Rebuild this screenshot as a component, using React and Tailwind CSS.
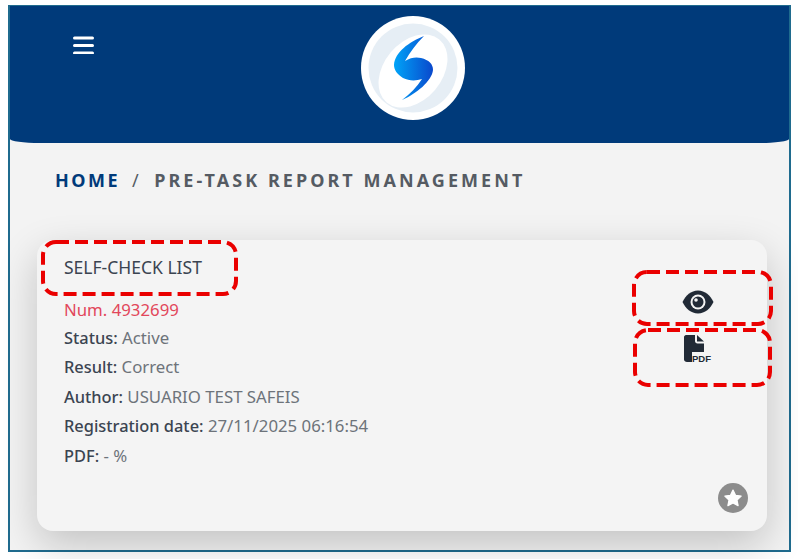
import React from 'react';

// red dashed callouts drawn over the card
function Callout({ width, height, className }) {
  return (
    <svg width={width} height={height} className={`absolute ${className}`} fill="none">
      <rect
        x="2"
        y="2"
        width={width - 4}
        height={height - 4}
        rx="13"
        stroke="#ea0000"
        strokeWidth="4"
        strokeDasharray="13 6"
      />
    </svg>
  );
}

function Logo() {
  return (
    <div className="w-[104px] h-[104px] rounded-full bg-white">
      <svg width="104" height="104" viewBox="0 0 104 104">
        <defs>
          <linearGradient id="swoosh" x1="0" y1="0" x2="1" y2="0">
            <stop offset="0" stopColor="#00a4f8" />
            <stop offset="1" stopColor="#0a48cc" />
          </linearGradient>
        </defs>
        <circle cx="52" cy="52" r="44.5" fill="#e6eef5" />
        <ellipse cx="52" cy="55" rx="41" ry="29" fill="#ffffff" transform="rotate(-50 52 55)" />
        <path
          d="M63 20C55 28 49 36 44 45C50 41 56 41 60 42C68 44 72 48 72 54C71 65 55 78 41 84C49 78 56 71 61 63C55 65 48 65 42 62C36 58 33 54 33 49C34 36 48 26 63 20Z"
          fill="url(#swoosh)"
        />
      </svg>
    </div>
  );
}

function Row({ label, value }) {
  return (
    <p className="h-[29.4px] leading-[29.4px] text-[#3b4451]">
      <span className="font-medium text-[16.4px]">{label}</span> <span className="text-[#6d737a]">{value}</span>
    </p>
  );
}

export default function App() {
  return (
    <div className="w-[798px] h-[559px] bg-white pt-[5px] pl-[8px] overflow-hidden font-['Noto_Sans',sans-serif]">
      <div className="relative w-[783px] h-[547px] border-2 border-t-[1px] border-[#1f6b8e] bg-[#f3f3f3] flex flex-col">
        {/* Header */}
        <header className="h-[137px] shrink-0 bg-[#003a7a] rounded-b-[30px_4px] flex justify-between pl-[61px]">
          <svg width="24" height="24" viewBox="0 0 24 24" className="mt-[24px]" fill="none" stroke="#ffffff" strokeWidth="3" strokeLinecap="round">
            <path d="M3.500 8h18M3.500 15.500h18M3.500 23h18" />
          </svg>
          <div className="mt-[10px] mr-[324px]">
            <Logo />
          </div>
        </header>

        {/* Breadcrumb */}
        <nav className="h-[97px] shrink-0 pt-[24px] pl-[45px] text-[18px] leading-[26px] font-bold tracking-[2.5px] text-[#555b63]">
          <span className="text-[#003a7a]">HOME</span>
          <span className="ml-[12px] mr-[13px] font-normal">/</span>
          <span className="tracking-[3.05px]">PRE-TASK REPORT MANAGEMENT</span>
        </nav>

        {/* Card */}
        <section className="relative ml-[27px] w-[730px] h-[291px] rounded-[16px] bg-[#f4f4f4] shadow-[0_14px_40px_rgba(0,0,0,0.2)] flex justify-between pl-[27px] pr-[19px] pt-[13px] pb-[18px] text-[16.8px]">
          <div>
            <h2 className="h-[28px] leading-[28px] mb-[15px] text-[17.5px] text-[#3b4451]">SELF-CHECK LIST</h2>
            <p className="h-[27px] leading-[28px] text-[#e2475b]">Num. 4932699</p>
            <Row label="Status:" value="Active" />
            <Row label="Result:" value="Correct" />
            <Row label="Author:" value="USUARIO TEST SAFEIS" />
            <Row label="Registration date:" value="27/11/2025 06:16:54" />
            <Row label="PDF:" value="- %" />
          </div>

          <div className="flex flex-col items-end justify-between">
            <div className="flex flex-col items-center mt-[37px] mr-[34px]">
              <svg width="32" height="24" viewBox="0 0 32 24">
                <path d="M16 0.500C9 0.500 3.500 5.500 0.500 12C3.500 18.500 9 23.500 16 23.500C23 23.500 28.500 18.500 31.500 12C28.500 5.500 23 0.500 16 0.500Z" fill="#212a36" />
                <circle cx="16" cy="12" r="7.500" fill="#f4f4f4" />
                <circle cx="16" cy="12" r="5.500" fill="#212a36" />
                <circle cx="14" cy="10" r="1.800" fill="#f4f4f4" />
              </svg>
              <svg width="28" height="28" viewBox="0 0 28 28" className="mt-[21px]">
                <path d="M2 0H11V6C11 7.500 12 8.500 13.500 8.500H20V17H8V27H3C1.500 27 0 26 0 24.500V2C0 1 1 0 2 0Z" fill="#212a36" />
                <path d="M13 0L20 6.500H13Z" fill="#212a36" />
                <text x="8" y="27" fontFamily="Liberation Sans, sans-serif" fontSize="9.500" fontWeight="700" fill="#212a36">PDF</text>
              </svg>
            </div>
            <div className="w-[30px] h-[30px] rounded-full bg-[#8c8c8c] flex items-center justify-center">
              <svg width="20" height="20" viewBox="0 0 24 24" fill="#ffffff">
                <path d="M12 2.500L15 8.800L21.800 9.700L16.800 14.400L18.100 21.200L12 17.900L5.900 21.200L7.200 14.400L2.200 9.700L9 8.800Z" stroke="#ffffff" strokeWidth="1.500" strokeLinejoin="round" />
              </svg>
            </div>
          </div>

          <Callout width={197} height={56} className="left-[4px] top-0" />
          <Callout width={141} height={56} className="left-[595px] top-[30px]" />
          <Callout width={139} height={59} className="left-[596px] top-[88px]" />
        </section>
      </div>
    </div>
  );
}
